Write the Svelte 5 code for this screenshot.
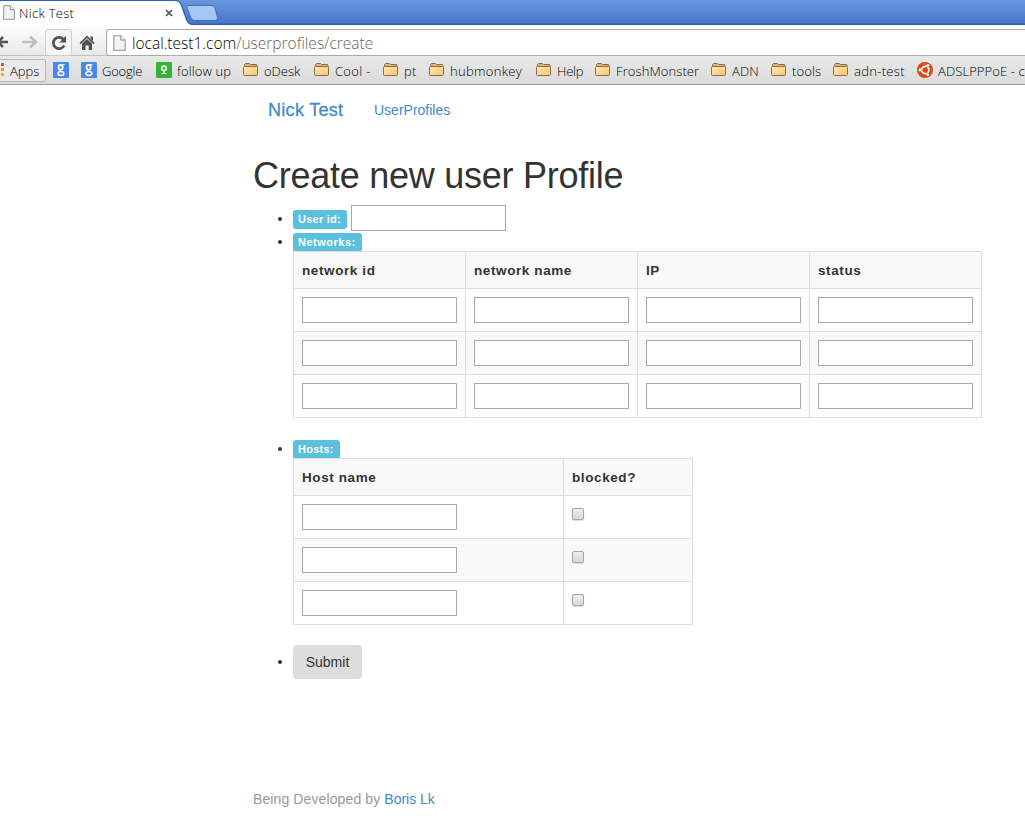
<script>
  const bookmarks = [
    { icon: 'google', label: '', width: 28, spacing: 0 },
    { icon: 'google', label: 'Google', width: 75, spacing: -0.2 },
    { icon: 'follow', label: 'follow up', width: 87, spacing: 0.1 },
    { icon: 'folder', label: 'oDesk', width: 71, spacing: 0 },
    { icon: 'folder', label: 'Cool -', width: 69, spacing: 0.3 },
    { icon: 'folder', label: 'pt', width: 46, spacing: 0.2 },
    { icon: 'folder', label: 'hubmonkey', width: 107, spacing: 0.3 },
    { icon: 'folder', label: 'Help', width: 59, spacing: -0.2 },
    { icon: 'folder', label: 'FroshMonster', width: 116, spacing: 0.1 },
    { icon: 'folder', label: 'ADN', width: 60, spacing: 0.1 },
    { icon: 'folder', label: 'tools', width: 62, spacing: 0.1 },
    { icon: 'folder', label: 'adn-test', width: 84, spacing: 0.3 },
    { icon: 'ubuntu', label: 'ADSLPPPoE - c', width: 120, spacing: 0.1 }
  ];
  const networkColumns = ['network id', 'network name', 'IP', 'status'];
  const rows = [0, 1, 2];
</script>

{#snippet page(w, h)}
  <svg width={w} height={h} viewBox="0 0 12 15">
    <path d="M.7 .7H7.3L11.3 4.7V14.3H.7Z" fill="#f4f4f4" stroke="#919191" />
    <path d="M7.3 .7V4.7H11.3" fill="#fff" stroke="#919191" />
  </svg>
{/snippet}

<div class="browser">
  <header class="tabs">
    <svg class="tabshape" width="230" height="26" viewBox="0 0 230 26">
      <path d="M0 1H175Q179 1 180.500 5L186 20Q188 25 193 25H230V26H0Z" fill="#fff" />
      <path d="M0 .5H175Q180 .5 181.500 5L187 20Q188.500 24.500 193 24.500H230" fill="none" stroke="#365da6" />
      <path d="M188.500 5.500H211Q214 5.500 215 8L217.500 17.500Q218 20.500 215 20.500H195Q192 20.500 191 18L187 8Q186 5.500 188.500 5.500Z" fill="#a4c7f5" stroke="#4870b8" />
    </svg>
    <div class="tab">
      {@render page(12, 15)}
      <span class="title">Nick Test</span>
      <svg class="close" width="8" height="8" viewBox="0 0 8 8"><path d="M1 1L7 7M7 1L1 7" stroke="#555" stroke-width="1.7" /></svg>
    </div>
  </header>

  <div class="toolbar">
    <svg class="back" width="8" height="12" viewBox="0 0 8 12"><path d="M0 6H8M-2 6L3 1M-2 6L3 11" fill="none" stroke="#555" stroke-width="2.6" /></svg>
    <svg class="forward" width="16" height="14" viewBox="0 0 16 14"><path d="M0 7H13M8 1.500L14 7L8 12.500" fill="none" stroke="#bebebe" stroke-width="2.6" /></svg>
    <div class="reload">
      <svg width="16" height="16" viewBox="0 0 16 16"><path d="M12.600 4.500A5.700 5.700 0 1 0 13.200 10.500" fill="none" stroke="#505050" stroke-width="2.700" /><path d="M15 .8V7.500H8.300Z" fill="#505050" /></svg>
    </div>
    <svg class="home" width="16" height="16" viewBox="0 0 16 16"><path d="M8 .5L15.500 8L14.300 9.200L8 3L1.700 9.200L.5 8ZM11.500 1.500H14V6L11.500 3.500Z" fill="#505050" /><path d="M3 8.700L8 4L13 8.700V15H9.700V10.500H6.500V15H3Z" fill="#505050" /></svg>
    <div class="address">
      {@render page(13, 16)}
      <span class="url"><b>local.test1.com</b><i>/userprofiles/create</i></span>
    </div>
  </div>

  <nav class="bookmarks">
    <div class="apps">
      <svg width="4" height="14" viewBox="0 0 4 14"><path d="M1 0H4V3H1Z" fill="#e8453c" /><path d="M1 5H4V8H1Z" fill="#f4941c" /><path d="M1 10H4V13H1Z" fill="#f4b400" /></svg>
      <span>Apps</span>
    </div>
    {#each bookmarks as mark}
      <div class="bookmark" style:width="{mark.width}px">
        {#if mark.icon === 'folder'}
          <svg width="16" height="16" viewBox="0 0 16 16">
            <defs><linearGradient id="folder" x1="0" y1="0" x2="1" y2="1"><stop stop-color="#ffe9ba" /><stop offset="1" stop-color="#fbc467" /></linearGradient></defs>
            <path d="M1.500 4.500V2.500L2.500 1.500H6.500L7.500 2.500H13.500L14.500 4.500" fill="#dfb574" stroke="#8c6a4a" />
            <rect x=".5" y="4.500" width="14" height="9" rx="1" fill="url(#folder)" stroke="#8c6a4a" />
          </svg>
        {:else if mark.icon === 'google'}
          <svg width="16" height="16" viewBox="0 0 16 16">
            <rect width="16" height="16" rx="1" fill="#4a86f0" />
            <ellipse cx="7.600" cy="5.200" rx="2.100" ry="2.400" fill="none" stroke="#fff" stroke-width="1.700" />
            <path d="M8 2.200H12L11 3.300H9Z" fill="#fff" />
            <path d="M7.300 7.500C6 8.800 7.600 9 8.800 9.800" fill="none" stroke="#fff" stroke-width="1.500" />
            <ellipse cx="7.900" cy="11.500" rx="2.900" ry="1.900" fill="none" stroke="#fff" stroke-width="1.500" />
          </svg>
        {:else if mark.icon === 'follow'}
          <svg width="16" height="16" viewBox="0 0 16 16">
            <rect width="16" height="16" rx="1" fill="#36b336" />
            <circle cx="8" cy="6.300" r="2.300" fill="none" stroke="#fff" stroke-width="1.500" />
            <path d="M8 8.500V11.500M5.500 11.500H10.500" stroke="#fff" stroke-width="1.200" />
          </svg>
        {:else}
          <svg width="16" height="16" viewBox="0 0 16 16">
            <circle cx="8" cy="8" r="8" fill="#dd4814" />
            <circle cx="8.300" cy="8" r="3.600" fill="none" stroke="#fff" stroke-width="1.800" />
            <path d="M8.300 8H2M8.300 8L11.500 2.500M8.300 8L11.500 13.500" stroke="#dd4814" stroke-width="1" />
            <circle cx="3" cy="8" r="1.400" fill="#fff" /><circle cx="10.900" cy="3.300" r="1.400" fill="#fff" /><circle cx="10.900" cy="12.700" r="1.400" fill="#fff" />
          </svg>
        {/if}
        {#if mark.label}<span style:letter-spacing="{mark.spacing}px">{mark.label}</span>{/if}
      </div>
    {/each}
  </nav>

  <main>
    <div class="nav"><a class="brand" href="#home">Nick Test</a><a class="link" href="#profiles">UserProfiles</a></div>
    <h1>Create new user Profile</h1>
    <ul>
      <li class="user"><span class="label userid">User id:</span><input aria-label="User id" /></li>
      <li class="networks">
        <div>
          <span class="label net">Networks:</span>
          <table class="wide">
            <thead><tr>{#each networkColumns as column}<th>{column}</th>{/each}</tr></thead>
            <tbody>{#each rows as row}<tr>{#each networkColumns as column}<td><input aria-label={column} /></td>{/each}</tr>{/each}</tbody>
          </table>
        </div>
      </li>
      <li class="hosts">
        <div>
          <span class="label host">Hosts:</span>
          <table class="narrow">
            <thead><tr><th class="name">Host name</th><th>blocked?</th></tr></thead>
            <tbody>{#each rows as row}<tr><td><input aria-label="Host name" /></td><td><input type="checkbox" aria-label="blocked" /></td></tr>{/each}</tbody>
          </table>
        </div>
      </li>
      <li class="send"><button>Submit</button></li>
    </ul>
    <footer>Being Developed by <a href="#author">Boris Lk</a></footer>
  </main>
</div>

<style>
  * { box-sizing: border-box; }
  .browser { width: 1025px; height: 840px; overflow: hidden; background: #fff; font-family: "Liberation Sans", Arial, sans-serif; font-size: 14px; color: #333; }
  svg { display: block; flex: none; overflow: hidden; }
  .tabs { height: 25px; position: relative; background: linear-gradient(#6797df, #4876cb 23px, #365da6 24px); }
  .tabshape { position: absolute; left: 0; top: 0; }
  .tab { position: relative; display: flex; align-items: center; height: 25px; padding-left: 3px; width: 173px; font: 300 13px "Open Sans", "Noto Sans", sans-serif; color: #000; }
  .title { margin-left: 4px; letter-spacing: 0.3px; white-space: nowrap; }
  .close { margin-left: auto; }
  .toolbar { height: 31px; display: flex; background: linear-gradient(#fff, #e9e9e9); border-bottom: 1px solid #c1c1c1; }
  .back { margin-top: 11px; }
  .forward { margin: 10px 0 0 14px; }
  .reload { width: 27px; height: 27px; margin: 4px 0 0 7px; border: 1px solid #d0d0d0; border-radius: 3px; display: grid; place-items: center; background: #f5f5f5; }
  .home { margin: 10px 0 0 7px; }
  .address { margin: 4px 0 0 11px; flex: 1; height: 27px; border: 1px solid #aaa; border-right: 0; border-radius: 3px 0 0 3px; background: #fff; display: flex; align-items: center; padding-left: 6px; }
  .url { margin-left: 6px; font: 300 15.500px "Open Sans", "Noto Sans", sans-serif; white-space: nowrap; }
  .url b { font-weight: 300; color: #000; letter-spacing: 0; }
  .url i { font-style: normal; color: #666; letter-spacing: 0; }
  .bookmarks { height: 29px; display: flex; align-items: center; overflow: hidden; background: linear-gradient(#e9e9e9, #dbdbdb); border-bottom: 1px solid #9d9d9d; font: 300 13px "Open Sans", "Noto Sans", sans-serif; color: #000; }
  .apps { width: 46px; height: 23px; flex: none; display: flex; align-items: center; gap: 6px; border: 1px solid #b7b7b7; border-left: 0; border-radius: 0 3px 3px 0; background: #eaeaea; margin-right: 7px; }
  .bookmark { display: flex; align-items: center; gap: 5px; flex: none; white-space: nowrap; }
  .apps span, .bookmark span { padding-top: 1px; }
  main { padding-left: 253px; }
  a { color: #428bca; text-decoration: none; }
  .nav { height: 50px; display: flex; align-items: center; padding-left: 15px; }
  .brand { font-size: 18px; letter-spacing: .3px; -webkit-text-stroke: .3px #428bca; width: 106px; }
  h1 { margin: 21px 0 9px; font-size: 36px; line-height: 40px; font-weight: 400; letter-spacing: -.26px; white-space: nowrap; }
  ul { margin: 0; padding: 0 0 0 25px; list-style: none; }
  li { display: flex; align-items: flex-start; }
  li::before { content: ""; width: 4px; height: 4px; border-radius: 50%; background: #333; margin: 7px 11px 0 0; flex: none; }
  .label { display: block; height: 19px; border-radius: 3px; background: #5bc0de; color: #fff; font-size: 11px; font-weight: 700; line-height: 18px; padding-left: 5px; white-space: nowrap; letter-spacing: .25px; }
  .user { height: 28px; }
  .user::before { margin-top: 12px; }
  .userid { width: 54px; margin: 5px 4px 0 0; }
  .net { width: 69px; letter-spacing: .5px; }
  .host { width: 47px; }
  .networks { height: 207px; }
  .hosts { height: 205px; }
  .networks .label, .hosts .label { margin-bottom: -1px; }
  input { display: block; appearance: none; width: 155px; height: 26px; margin: 0; padding: 0; border: 1px solid #a9a9a9; border-radius: 0; background: #fff; }
  table { border-collapse: collapse; table-layout: fixed; border: 1px solid #ddd; }
  .wide { width: 689px; }
  .narrow { width: 400px; }
  .name { width: 270px; }
  th, td { border: 1px solid #ddd; padding: 8px; text-align: left; vertical-align: top; }
  th { height: 37px; padding: 9px 8px 7px; line-height: 20px; letter-spacing: .6px; font-size: 13.500px; }
  td { height: 43px; }
  thead tr, tbody tr:nth-child(even) { background: #f9f9f9; }
  input[type="checkbox"] { width: 12px; height: 12px; margin-top: 4px; border-radius: 2px; background: linear-gradient(#eee, #d9d9d9); border-color: #a6a6a6; box-shadow: 0 1px 1px #ddd; }
  .send::before { margin-top: 15px; }
  button { width: 69px; height: 34px; padding: 0; border: 0; border-radius: 4px; background: #ddd; color: #333; font: 14px "Liberation Sans", Arial, sans-serif; }
  footer { margin-top: 110px; line-height: 20px; color: #999; letter-spacing: .11px; }
  footer a { letter-spacing: 0; }
</style>
